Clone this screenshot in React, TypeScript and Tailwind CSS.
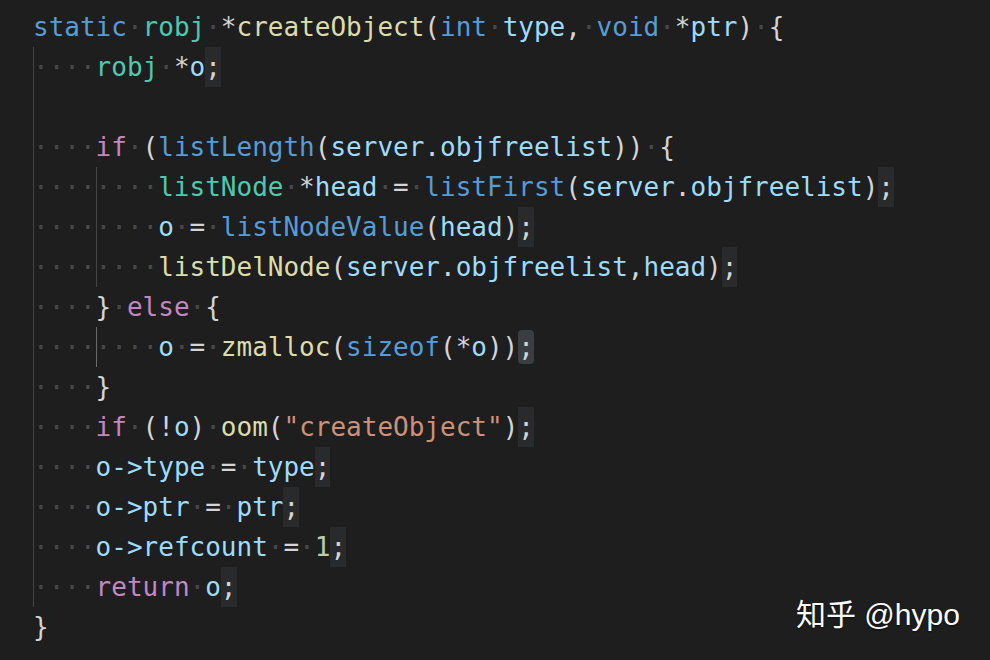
type Tok = [string, string] | [string, string, "semi" | "cursor"];

const C = {
  kw: "text-[#569cd6]",
  type: "text-[#4ec9b0]",
  fn: "text-[#dcdcaa]",
  v: "text-[#9cdcfe]",
  p: "text-[#d4d4d4]",
  ctl: "text-[#c586c0]",
  str: "text-[#ce9178]",
  num: "text-[#b5cea8]",
};

type Line = { indent: number; guides?: string[]; toks: Tok[] };

const lines: Line[] = [
  {
    indent: 0,
    toks: [
      ["static", C.kw], [" ", ""], ["robj", C.type], [" ", ""], ["*", C.p],
      ["createObject", C.fn], ["(", C.p], ["int", C.kw], [" ", ""], ["type", C.v],
      [",", C.p], [" ", ""], ["void", C.kw], [" ", ""], ["*", C.p], ["ptr", C.v],
      [")", C.p], [" ", ""], ["{", C.p],
    ],
  },
  { indent: 1, toks: [["robj", C.type], [" ", ""], ["*", C.p], ["o", C.v], [";", C.p, "semi"]] },
  { indent: 0, guides: ["dim"], toks: [] },
  {
    indent: 1,
    toks: [
      ["if", C.ctl], [" ", ""], ["(", C.p], ["listLength", C.kw], ["(", C.p],
      ["server", C.v], [".", C.p], ["objfreelist", C.v], ["))", C.p], [" ", ""], ["{", C.p],
    ],
  },
  {
    indent: 2,
    toks: [
      ["listNode", C.type], [" ", ""], ["*", C.p], ["head", C.v], [" ", ""], ["=", C.p], [" ", ""],
      ["listFirst", C.kw], ["(", C.p], ["server", C.v], [".", C.p], ["objfreelist", C.v],
      [")", C.p], [";", C.p, "semi"],
    ],
  },
  {
    indent: 2,
    toks: [
      ["o", C.v], [" ", ""], ["=", C.p], [" ", ""], ["listNodeValue", C.kw], ["(", C.p],
      ["head", C.v], [")", C.p], [";", C.p, "semi"],
    ],
  },
  {
    indent: 2,
    toks: [
      ["listDelNode", C.fn], ["(", C.p], ["server", C.v], [".", C.p], ["objfreelist", C.v],
      [",", C.p], ["head", C.v], [")", C.p], [";", C.p, "semi"],
    ],
  },
  { indent: 1, toks: [["}", C.p], [" ", ""], ["else", C.ctl], [" ", ""], ["{", C.p]] },
  {
    indent: 2,
    guides: ["dim", "active"],
    toks: [
      ["o", C.v], [" ", ""], ["=", C.p], [" ", ""], ["zmalloc", C.fn], ["(", C.p],
      ["sizeof", C.kw], ["(", C.p], ["*", C.p], ["o", C.v], ["))", C.p], [";", C.p, "cursor"],
    ],
  },
  { indent: 1, toks: [["}", C.p]] },
  {
    indent: 1,
    toks: [
      ["if", C.ctl], [" ", ""], ["(", C.p], ["!", C.p], ["o", C.v], [")", C.p], [" ", ""],
      ["oom", C.fn], ["(", C.p], ['"createObject"', C.str], [")", C.p], [";", C.p, "semi"],
    ],
  },
  {
    indent: 1,
    toks: [
      ["o->type", C.v], [" ", ""], ["=", C.p], [" ", ""], ["type", C.v], [";", C.p, "semi"],
    ],
  },
  {
    indent: 1,
    toks: [["o->ptr", C.v], [" ", ""], ["=", C.p], [" ", ""], ["ptr", C.v], [";", C.p, "semi"]],
  },
  {
    indent: 1,
    toks: [
      ["o->refcount", C.v], [" ", ""], ["=", C.p], [" ", ""], ["1", C.num], [";", C.p, "semi"],
    ],
  },
  { indent: 1, toks: [["return", C.ctl], [" ", ""], ["o", C.v], [";", C.p, "semi"]] },
  { indent: 0, toks: [["}", C.p]] },
];

const guideClass: Record<string, string> = {
  dim: "shadow-[inset_1px_0_0_#444444]",
  active: "shadow-[inset_1px_0_0_#6a6a6a]",
};

function Dot() {
  return <span className="text-[#474747]">·</span>;
}

function CodeLine({ line }: { line: Line }) {
  const guides = line.guides ?? Array.from({ length: line.indent }, () => "dim");
  return (
    <div className="flex h-[40px] leading-[40px] whitespace-pre">
      {guides.map((g, i) => (
        <span key={i} className={`inline-block h-[40px] w-[4ch] ${guideClass[g]}`}>
          {i < line.indent ? (
            <>
              <Dot />
              <Dot />
              <Dot />
              <Dot />
            </>
          ) : null}
        </span>
      ))}
      {line.toks.map((t, i) => {
        if (t[0] === " ") return <Dot key={i} />;
        if (t[2] === "semi")
          return (
            <span key={i} className={`inline-block h-[40px] bg-[#282a2c] ${t[1]}`}>
              {t[0]}
            </span>
          );
        if (t[2] === "cursor")
          return (
            <span key={i} className="flex h-[40px] items-center">
              <span className={`inline-block h-[34px] rounded-[4px] bg-[#3a3d41] leading-[34px] ${t[1]}`}>
                {t[0]}
              </span>
            </span>
          );
        return (
          <span key={i} className={t[1]}>
            {t[0]}
          </span>
        );
      })}
    </div>
  );
}

export default function App() {
  return (
    <div className="relative h-[660px] w-[990px] overflow-hidden bg-[#1e1e1e]">
      <div className="pl-[33px] pt-[7px] font-['DejaVu_Sans_Mono',monospace] text-[26px]">
        {lines.map((line, i) => (
          <CodeLine key={i} line={line} />
        ))}
      </div>
      <div className="absolute left-[796px] top-[590px] font-['Liberation_Sans','Noto_Sans_CJK_SC',sans-serif] text-[30px] leading-[44px] text-white [text-shadow:0_1px_2px_rgba(0,0,0,0.6)]">
        <span className="font-['Noto_Sans_CJK_SC',sans-serif]">知乎</span> @hypo
      </div>
    </div>
  );
}
